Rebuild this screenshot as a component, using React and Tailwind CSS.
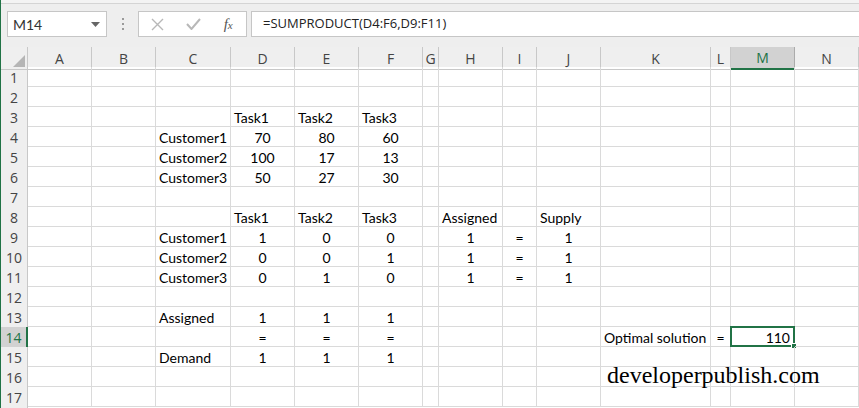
import React from 'react';

const cols = [
  ['A', 64], ['B', 64], ['C', 75], ['D', 64], ['E', 64], ['F', 64], ['G', 16],
  ['H', 64], ['I', 34], ['J', 64], ['K', 110], ['L', 20], ['M', 64], ['N', 64],
];

// cell contents: [text, align]
const cells = {
  D3: ['Task1', 'l'], E3: ['Task2', 'l'], F3: ['Task3', 'l'],
  C4: ['Customer1', 'l'], D4: ['70', 'c'], E4: ['80', 'c'], F4: ['60', 'c'],
  C5: ['Customer2', 'l'], D5: ['100', 'c'], E5: ['17', 'c'], F5: ['13', 'c'],
  C6: ['Customer3', 'l'], D6: ['50', 'c'], E6: ['27', 'c'], F6: ['30', 'c'],
  D8: ['Task1', 'l'], E8: ['Task2', 'l'], F8: ['Task3', 'l'], H8: ['Assigned', 'l'], J8: ['Supply', 'l'],
  C9: ['Customer1', 'l'], D9: ['1', 'c'], E9: ['0', 'c'], F9: ['0', 'c'], H9: ['1', 'c'], I9: ['=', 'c'], J9: ['1', 'c'],
  C10: ['Customer2', 'l'], D10: ['0', 'c'], E10: ['0', 'c'], F10: ['1', 'c'], H10: ['1', 'c'], I10: ['=', 'c'], J10: ['1', 'c'],
  C11: ['Customer3', 'l'], D11: ['0', 'c'], E11: ['1', 'c'], F11: ['0', 'c'], H11: ['1', 'c'], I11: ['=', 'c'], J11: ['1', 'c'],
  C13: ['Assigned', 'l'], D13: ['1', 'c'], E13: ['1', 'c'], F13: ['1', 'c'],
  D14: ['=', 'c'], E14: ['=', 'c'], F14: ['=', 'c'], K14: ['Optimal solution', 'l'], L14: ['=', 'c'], M14: ['110', 'r'],
  C15: ['Demand', 'l'], D15: ['1', 'c'], E15: ['1', 'c'], F15: ['1', 'c'],
};

const gridCols =
  'grid grid-cols-[27px_64px_64px_75px_64px_64px_64px_16px_64px_34px_64px_110px_20px_64px_64px]';

const alignClass = { l: 'justify-start pl-[3px]', c: 'justify-center', r: 'justify-end pr-[4px]' };

const Cell = ({ id }) => {
  const c = cells[id];
  const selected = id === 'M14';
  return (
    <div className="relative h-5 border-r border-b border-[#dadada]">
      {c && (
        <div className={`absolute inset-0 pt-[1px] flex items-center whitespace-nowrap ${alignClass[c[1]]}`}>
          {c[0]}
        </div>
      )}
      {selected && (
        <>
          <div className="absolute -left-[1px] -top-[1px] -right-[1px] -bottom-[1px] border-2 border-[#217346]" />
          <div className="absolute -right-[3px] -bottom-[3px] w-[6px] h-[6px] bg-[#217346] border border-white" />
        </>
      )}
    </div>
  );
};

const App = () => {
  const rows = Array.from({ length: 17 }, (_, i) => i + 1);
  return (
    <div
      className="relative w-[859px] h-[408px] overflow-hidden bg-white border-l border-[#217346] text-black"
      style={{ fontFamily: 'Lato, "Open Sans", sans-serif' }}
    >
      {/* formula bar */}
      <div className="h-[4px] bg-[#f3f3f3] border-b border-[#d4d4d4]" />
      <div className="h-[43px] bg-[#eeeeee] flex items-start pt-[7px] pl-[6px] gap-0">
        <div className="w-[100px] h-[26px] bg-white border border-[#c6c6c6] flex items-center justify-between pl-[5px] pr-[6px] text-[14px] text-[#333]">
          <span>M14</span>
          <svg width="9" height="5" viewBox="0 0 9 5"><path d="M0 0h9L4.5 5z" fill="#666" /></svg>
        </div>
        <div className="w-[31px] h-[26px] flex flex-col items-center justify-center gap-[3px]">
          <span className="w-[2px] h-[2px] bg-[#9a9a9a]" />
          <span className="w-[2px] h-[2px] bg-[#9a9a9a]" />
          <span className="w-[2px] h-[2px] bg-[#9a9a9a]" />
        </div>
        <div className="w-[109px] h-[26px] bg-white border border-[#c6c6c6] flex items-center">
          <div className="w-[38px] flex justify-center">
            <svg width="13" height="13" viewBox="0 0 13 13"><path d="M1 1l11 11M12 1L1 12" stroke="#b8b8b8" strokeWidth="1.4" /></svg>
          </div>
          <div className="w-[34px] flex justify-center">
            <svg width="15" height="12" viewBox="0 0 15 12"><path d="M1 6l4.5 5L14 1" stroke="#b8b8b8" strokeWidth="2" fill="none" /></svg>
          </div>
          <div className="w-[36px] flex justify-center italic text-[15px] text-[#555]" style={{ fontFamily: '"Liberation Serif", serif' }}>
            f<span className="text-[11px] mt-[4px]">x</span>
          </div>
        </div>
        <div className="ml-[4px] flex-1 h-[26px] bg-white border border-[#c6c6c6] border-r-0 flex items-center pl-[11px] text-[13px] text-[#222]" style={{ fontFamily: '"Open Sans", sans-serif' }}>
          =SUMPRODUCT(D4:F6,D9:F11)
        </div>
      </div>

      {/* column headers */}
      <div className={`${gridCols} h-5 bg-[#efefef] text-[14px] text-[#444]`} style={{ fontFamily: '"Open Sans", sans-serif' }}>
        <div className="relative border-r border-b border-[#c8c8c8]">
          <svg className="absolute right-[2px] bottom-[2px]" width="12" height="12" viewBox="0 0 12 12"><path d="M12 0v12H0z" fill="#b5b5b5" /></svg>
        </div>
        {cols.map(([c]) =>
          c === 'M' ? (
            <div key={c} className="flex items-center justify-center bg-[#d2d2d2] text-[#217346] border-r border-[#ababab] border-b-2 border-b-[#217346]">
              {c}
            </div>
          ) : (
            <div key={c} className="flex items-center justify-center border-r border-b border-[#c8c8c8]">{c}</div>
          )
        )}
      </div>

      {/* rows */}
      <div className="text-[14px]">
        {rows.map((r) => (
          <div key={r} className={`${gridCols} h-5`}>
            {r === 14 ? (
              <div className="flex items-center justify-center bg-[#d2d2d2] text-[#217346] text-[14px] border-r-2 border-[#217346] border-b border-b-[#ababab]" style={{ fontFamily: '"Open Sans", sans-serif' }}>
                {r}
              </div>
            ) : (
              <div className="flex items-center justify-center bg-[#efefef] text-[#444] text-[14px] border-r border-b border-[#c8c8c8]" style={{ fontFamily: '"Open Sans", sans-serif' }}>
                {r}
              </div>
            )}
            {cols.map(([c]) => (
              <Cell key={c} id={`${c}${r}`} />
            ))}
          </div>
        ))}
      </div>

      {/* watermark */}
      <div
        className="absolute left-[606px] top-[363px] text-[24px] text-black leading-none"
        style={{ fontFamily: '"Liberation Serif", serif' }}
      >
        developerpublish.com
      </div>
    </div>
  );
};

export default App;
